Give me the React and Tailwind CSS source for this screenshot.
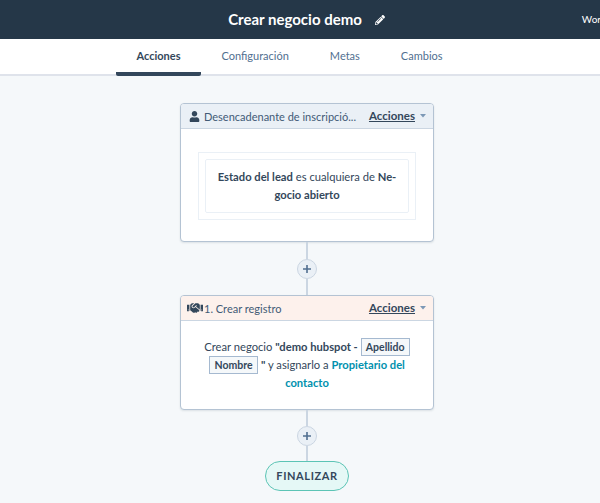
import React from "react";
import { FaHandshake, FaPencilAlt, FaUser } from "react-icons/fa";

const tabs = ["Acciones", "Configuración", "Metas", "Cambios"];

const Connector = ({ height }) => (
  <div className={`mx-auto w-[2px] bg-[#cbd6e2] ${height}`}></div>
);

const PlusButton = () => (
  <div className="mx-auto flex h-[20px] w-[20px] items-center justify-center rounded-full border border-[#cbd6e2] bg-[#eaf0f6]">
    <svg width="10" height="10" viewBox="0 0 10 10">
      <path d="M5 1v8M1 5h8" stroke="#516f90" strokeWidth="1.6" />
    </svg>
  </div>
);

const CardHeader = ({ icon, title, color }) => (
  <div className={`flex h-[25px] items-center border-b border-[#cbd6e2] pl-[5px] pr-[7px] ${color}`}>
    <div className="flex w-[17px] shrink-0 justify-center text-[#33475b]">{icon}</div>
    <span className="ml-[1px] whitespace-nowrap text-[11px] leading-none text-[#425b76]">{title}</span>
    <span className="ml-auto text-[11.5px] font-bold leading-none text-[#33475b] underline">Acciones</span>
    <svg className="ml-[5px]" width="6" height="4" viewBox="0 0 6 4">
      <path d="M0 0h6L3 3.5z" fill="#7c98b6" />
    </svg>
  </div>
);

const Token = ({ children }) => (
  <span className="inline-block h-[18px] w-[49px] border border-[#a5b9d0] bg-[#f5f8fa] text-center text-[10.5px] font-bold leading-[16px] text-[#33475b]">
    {children}
  </span>
);

export default function App() {
  return (
    <div className="h-[503px] w-[600px] overflow-hidden bg-[#f5f8fa] font-['Lato','Liberation_Sans',sans-serif] text-[#33475b]">
      <header className="grid h-[39px] grid-cols-[minmax(0,1fr)_auto_minmax(0,1fr)] items-center bg-[#253748] pl-[13px] text-white">
        <div></div>
        <div className="flex items-center">
          <span className="text-[15px] font-bold">Crear negocio demo</span>
          <FaPencilAlt className="ml-[13px] text-[10px]" />
        </div>
        <div className="overflow-hidden whitespace-nowrap pl-[197px] text-[10px]">Workflows</div>
      </header>

      <nav className="flex h-[37px] border-b-2 border-[#dfe3eb] bg-white pl-[116px]">
        {tabs.map((tab, i) => (
          <div
            key={tab}
            className={`flex h-[37px] items-center border-b-4 px-[20.5px] pt-[2px] text-[11px] ${
              i === 0 ? "rounded-b-[2px] border-[#33475b] font-bold" : "border-transparent text-[#516f90]"
            }`}
          >
            {tab}
          </div>
        ))}
      </nav>

      <main className="pl-[14px] pt-[27px]">
        <section className="mx-auto w-[254px] overflow-hidden rounded-[4px] border border-[#b4c3d3] bg-white shadow-[0_1px_2px_rgba(45,62,80,0.12)]">
          <CardHeader
            icon={<FaUser className="text-[11px]" />}
            title="Desencadenante de inscripció..."
            color="bg-[#eaf0f6]"
          />
          <div className="px-[17px] pb-[21px] pt-[23px]">
            <div className="border border-[#eaf0f6] p-[6px]">
              <div className="rounded-[2px] border border-[#eaf0f6] py-[8px] text-center text-[11.2px] leading-[18px]">
                <b>Estado del lead</b> es cualquiera de <b>Ne-</b>
                <br />
                <b>gocio abierto</b>
              </div>
            </div>
          </div>
        </section>

        <Connector height="h-[17px]" />
        <PlusButton />
        <Connector height="h-[16px]" />

        <section className="mx-auto w-[254px] overflow-hidden rounded-[4px] border border-[#b4c3d3] bg-white shadow-[0_1px_2px_rgba(45,62,80,0.12)]">
          <CardHeader
            icon={<FaHandshake className="text-[16px]" />}
            title="1. Crear registro"
            color="bg-[#fdf1ec]"
          />
          <div className="px-[10px] pb-[17px] pt-[17px] text-center text-[11.2px] leading-[18px]">
            Crear negocio <b>"demo hubspot -</b> <Token>Apellido</Token>
            <br />
            <Token>Nombre</Token> <b>"</b> y asignarlo a <b className="text-[#0091ae]">Propietario del</b>
            <br />
            <b className="text-[#0091ae]">contacto</b>
          </div>
        </section>

        <Connector height="h-[16px]" />
        <PlusButton />
        <Connector height="h-[15px]" />

        <div className="mx-auto flex h-[30px] w-[84px] items-center justify-center rounded-full border border-[#5cc4b5] bg-[#e5f8f6] text-[11px] font-bold tracking-[0.6px]">
          FINALIZAR
        </div>
      </main>
    </div>
  );
}
